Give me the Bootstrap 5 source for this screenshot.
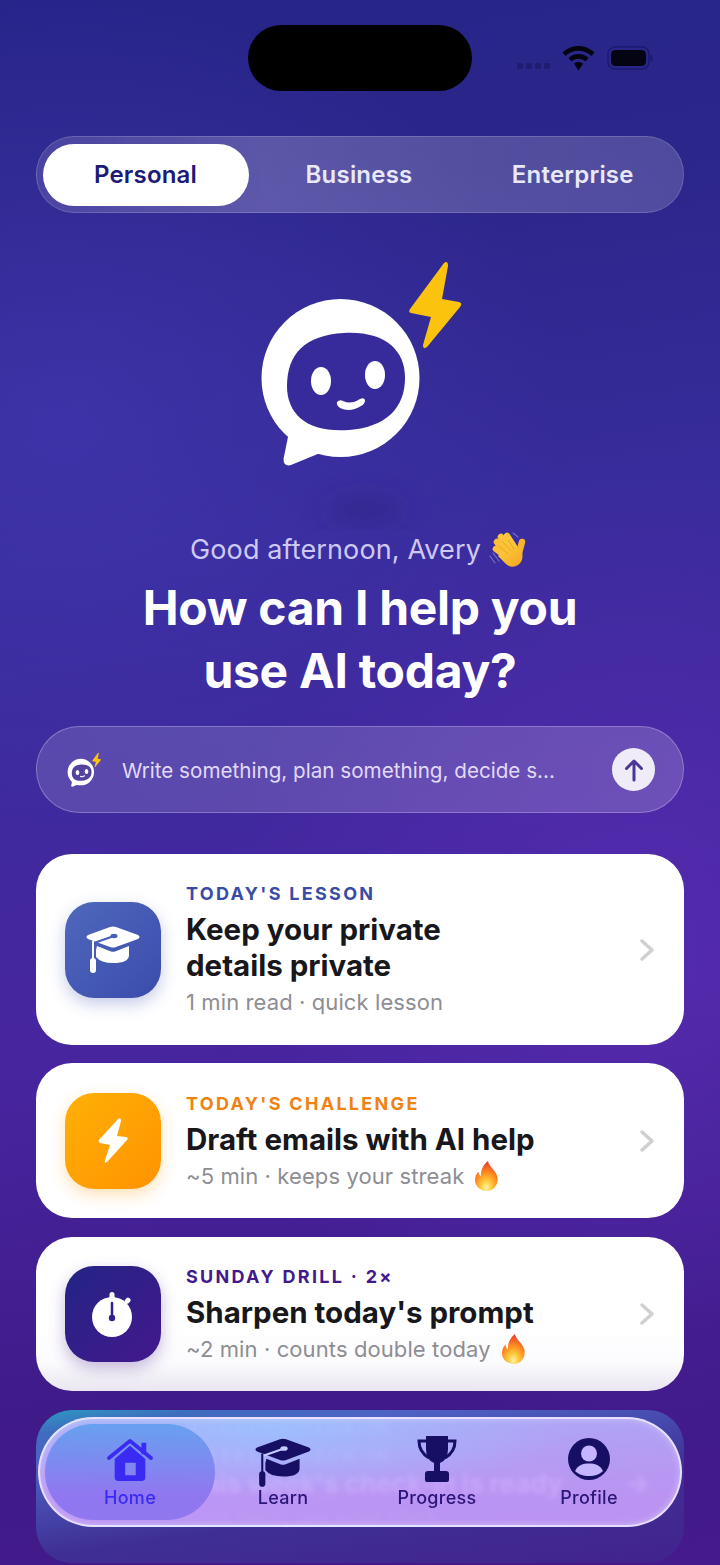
<!DOCTYPE html>
<html lang="en">
<head>
  <meta charset="UTF-8">
  <title>Home</title>
  <meta name="viewport" content="width=device-width, initial-scale=1">
  <link href="https://cdn.jsdelivr.net/npm/bootstrap@5.3.3/dist/css/bootstrap.min.css" rel="stylesheet">
  <style>
    body {
      margin: 0;
      font-family: "Inter", "Liberation Sans", sans-serif;
      background: #27288a;
    }

    .app-screen {
      width: 720px;
      height: 1565px;
      padding: 0 36px;
      background:
        radial-gradient(ellipse 420px 500px at 640px 950px, rgba(88, 44, 178, .75), transparent),
        radial-gradient(ellipse 500px 420px at 60px 420px, rgba(66, 54, 176, .7), transparent),
        linear-gradient(172deg, #27258a 0%, #2b2689 14%, #372c9b 34%, #41289f 52%, #47259f 64%, #3f1a88 86%, #451a8c 100%);
    }

    .status-row {
      display: grid;
      grid-template-columns: 1fr 224px 1fr;
      padding-top: 25px;
    }

    .island {
      height: 66px;
      background: #000;
      border-radius: 33px;
    }

    .status-icons {
      padding: 21px 0 0 45px;
      gap: 12px;
      margin-right: -36px;
    }

    .signal-dots {
      gap: 3px;
      margin-top: 17px;
    }

    .signal-dots i {
      width: 6px;
      height: 6px;
      border-radius: 1px;
      background: rgba(18, 16, 84, .42);
    }

    .plan-switch {
      display: grid;
      grid-template-columns: 206px 221px 1fr;
      height: 77px;
      margin-top: 45px;
      padding: 6.500px 7px 6.500px 5.500px;
      border: 1.500px solid rgba(255, 255, 255, .17);
      border-radius: 38px;
      background: linear-gradient(90deg, rgba(255, 255, 255, .12), rgba(255, 255, 255, .22) 35%, rgba(255, 255, 255, .17));
    }

    .plan-item {
      display: flex;
      align-items: center;
      justify-content: center;
      font-size: 24px;
      font-weight: 600;
      letter-spacing: .2px;
      color: #e9e7fa;
    }

    .plan-item.is-active {
      background: #fff;
      color: #1b1a78;
      border-radius: 31px;
    }

    .hero-mark {
      width: 210px;
      height: 272px;
      margin-top: 45px;
    }

    .greeting {
      height: 36px;
      margin-top: 2px;
      padding-right: 3px;
      font-size: 27px;
      line-height: 36px;
      letter-spacing: .12px;
      color: #cfc8f2;
      gap: 8px;
    }

    .hero-title {
      margin: 9px 0 0;
      font-size: 48px;
      line-height: 62.500px;
      font-weight: 700;
      letter-spacing: -.3px;
      color: #fff;
    }

    .ask-bar {
      height: 87px;
      margin-top: 24px;
      padding: 0 28px 0 29px;
      border: 1.500px solid rgba(255, 255, 255, .25);
      border-radius: 44px;
      background: linear-gradient(100deg, rgba(255, 255, 255, .14), rgba(255, 255, 255, .18));
    }

    .ask-text {
      margin-left: 20px;
      padding-top: 3px;
      font-size: 20.650px;
      color: #e0daf6;
      white-space: nowrap;
    }

    .ask-send {
      width: 43px;
      height: 43px;
      background: #efecf8;
    }

    .lesson-list {
      margin-top: 41px;
      gap: 18px;
    }

    .lesson-item {
      min-height: 155px;
      padding: 0 29px;
      gap: 25px;
      background: #fff;
      border-radius: 36px;
    }

    .lesson-item.is-tall {
      min-height: 191px;
    }

    .lesson-item.is-faded {
      min-height: 154px;
      margin-top: 1px;
      background: linear-gradient(180deg, #fff 60%, #fbfafd 82%, #e9e6f0 100%);
    }

    .lesson-copy {
      padding-top: 1px;
    }

    .tile {
      width: 96px;
      height: 96px;
      flex: none;
      border-radius: 29px;
    }

    .tile-blue {
      background: linear-gradient(135deg, #4f68bd, #3b4cab);
      box-shadow: 0 6px 16px rgba(64, 84, 180, .3);
    }

    .tile-orange {
      background: linear-gradient(135deg, #ffb006, #ff9300);
      box-shadow: 0 6px 16px rgba(255, 160, 20, .3);
    }

    .tile-indigo {
      background: linear-gradient(135deg, #232485, #44188c);
      box-shadow: 0 6px 16px rgba(68, 24, 140, .3);
    }

    .kicker {
      font-size: 18px;
      line-height: 24px;
      font-weight: 700;
      letter-spacing: 2.300px;
    }

    .kicker-blue { color: #3a4ba5; }
    .kicker-orange { color: #f08212; }
    .kicker-indigo { color: #421a8c; }

    .lesson-title {
      margin: 5px 0 0;
      font-size: 29.500px;
      line-height: 36px;
      font-weight: 700;
      color: #17171c;
    }

    .lesson-sub {
      margin-top: 4px;
      font-size: 22px;
      line-height: 30px;
      letter-spacing: .1px;
      color: #8d8d93;
      gap: 11px;
    }

    .lesson-arrow {
      margin-left: auto;
      flex: none;
    }

    .peek-card {
      height: 153px;
      margin-top: 19px;
      padding: 6px 34px 0 150px;
      border-radius: 36px;
      color: rgba(255, 255, 255, .6);
      background: linear-gradient(172deg, #2a9bc2 0%, #3f6cbe 10%, #4d62c4 22%, #3f2f94 60%, #42238e 100%);
    }

    .peek-label {
      font-size: 18px;
      font-weight: 700;
      letter-spacing: 2.400px;
      line-height: 24px;
      white-space: nowrap;
      opacity: .7;
    }

    .peek-echo {
      height: 28px;
    }

    .peek-title {
      font-size: 26px;
      font-weight: 700;
      line-height: 32px;
      white-space: nowrap;
    }

    .peek-sub {
      margin-top: 4px;
      font-size: 20px;
      line-height: 26px;
      white-space: nowrap;
      color: rgba(255, 255, 255, .2);
    }

    .tab-dock {
      position: absolute;
      left: 38px;
      top: 1417px;
      width: 644px;
      height: 110px;
      padding: 5px;
      border: 2px solid rgba(255, 255, 255, .68);
      border-radius: 55px;
      background:
        radial-gradient(ellipse 300px 70px at 230px 8px, rgba(150, 198, 255, .75), transparent),
        linear-gradient(180deg, rgba(190, 176, 255, .88), rgba(204, 163, 255, .88) 72%);
      box-shadow: inset 0 0 7px rgba(255, 255, 255, .35);
      backdrop-filter: blur(2px);
      display: grid;
      grid-template-columns: 170px 136px 172px 132px;
    }

    .tab-item {
      display: flex;
      flex-direction: column;
      align-items: center;
      justify-content: flex-end;
      height: 96px;
      padding-bottom: 11px;
      font-size: 18px;
      font-weight: 500;
      line-height: 22px;
      letter-spacing: .3px;
      color: #2b1578;
    }

    .tab-glyph-home { margin-bottom: 5px; }
    .tab-glyph-cap { margin-bottom: -1px; }
    .tab-glyph-cup { margin-bottom: 5px; }
    .tab-glyph-user { margin-bottom: 7px; }

    .tab-item.is-active {
      border-radius: 48px;
      color: #3a2af2;
      background: linear-gradient(180deg, rgba(100, 160, 238, .95), rgba(142, 118, 240, .95) 72%);
    }
  </style>
</head>
<body>

  <svg width="0" height="0" class="position-absolute">
    <defs>
      <radialGradient id="flame-fill" cx="50%" cy="88%" r="85%">
        <stop offset="0" stop-color="#fff3a6"/>
        <stop offset=".28" stop-color="#ffc93a"/>
        <stop offset=".6" stop-color="#ff8a1e"/>
        <stop offset="1" stop-color="#e8392c"/>
      </radialGradient>
      <linearGradient id="wave-fill" x1="0" y1="0" x2="1" y2="1">
        <stop offset="0" stop-color="#fdcf45"/>
        <stop offset="1" stop-color="#f6a71d"/>
      </linearGradient>
    </defs>
    <symbol id="cap-shape" viewBox="0 0 54 48">
      <path fill="currentColor" d="M24 1Q27 0 30 1L52 9Q55 11 52 13L30 21Q27 22 24 21L2 13Q-1 11 2 9Z"/>
      <path fill="currentColor" d="M11 20L25 25.500Q27 26 29 25.500L43 20V29Q43 37 27 37Q15 37 10 31V24Z"/>
      <path fill="none" stroke="var(--cut)" stroke-width="2.200" stroke-linecap="round" d="M28 10L8 17"/>
      <ellipse cx="28" cy="10" rx="3.500" ry="2.200" fill="var(--cut)"/>
      <path fill="none" stroke="currentColor" stroke-width="2" d="M7 15V33"/>
      <rect x="4" y="32" width="6" height="15" rx="3" fill="currentColor"/>
    </symbol>
    <symbol id="flame-shape" viewBox="0 0 24 30">
      <path fill="url(#flame-fill)" d="M13 0C13.500 5 20 9 22 14.500C24.500 22 19.500 30 12 30C5 30 0 25 0 19C0 15.500 1.500 12.500 3.500 10.500C3.500 13 4.500 14.500 6 15C5.500 9 8.500 3.500 13 0Z"/>
    </symbol>
  </svg>

  <div class="app-screen position-relative overflow-hidden">

    <div class="status-row">
      <div></div>
      <div class="island"></div>
      <div class="status-icons d-flex align-items-start">
        <div class="signal-dots d-flex">
          <i></i><i></i><i></i><i></i>
        </div>
        <svg width="33" height="25" viewBox="0 0 33 25">
          <path fill="#050510" d="M16.500 0C10 0 5 2.500 .5 6.500L3.500 10C7 6.800 11.500 4.800 16.500 4.800S26 6.800 29.500 10L32.500 6.500C28 2.500 23 0 16.500 0Z"/>
          <path fill="#050510" d="M16.500 8C12.500 8 9.200 9.500 6.500 12L9.600 15.400C11.500 13.700 13.800 12.700 16.500 12.700S21.500 13.700 23.400 15.400L26.500 12C23.800 9.500 20.500 8 16.500 8Z"/>
          <path fill="#050510" d="M16.500 16C14.700 16 13.200 16.600 12 17.800L16.500 24.500L21 17.800C19.800 16.600 18.300 16 16.500 16Z"/>
        </svg>
        <svg width="47" height="24" viewBox="0 0 47 24">
          <rect x="1" y="1" width="41" height="22" rx="7" fill="none" stroke="#1b1a70" stroke-width="1.500"/>
          <rect x="4" y="4" width="35" height="16" rx="4.500" fill="#040412"/>
          <rect x="43.500" y="9" width="2" height="6" rx="1" fill="#1b1a70"/>
        </svg>
      </div>
    </div>

    <div class="plan-switch">
      <div class="plan-item is-active">Personal</div>
      <div class="plan-item">Business</div>
      <div class="plan-item">Enterprise</div>
    </div>

    <div class="hero-mark mx-auto">
      <svg width="210" height="272" viewBox="255 258 210 272">
        <defs>
          <filter id="soft-shadow" x="-80%" y="-150%" width="260%" height="400%">
            <feGaussianBlur stdDeviation="12"/>
          </filter>
        </defs>
        <ellipse cx="364" cy="510" rx="40" ry="11" fill="#2a2278" opacity=".5" filter="url(#soft-shadow)"/>
        <circle cx="340.500" cy="378" r="79" fill="#fff"/>
        <path fill="#fff" d="M289 432L283.500 459Q283.500 467 291 465L325 451Z"/>
        <path fill="#372b9b" d="M344 333C385 331 405 350 405 378C405 408 386 427 349 430C308 433 287 415 287 386C287 354 305 335 344 333Z"/>
        <ellipse cx="321" cy="381" rx="10" ry="14" fill="#fff"/>
        <ellipse cx="375" cy="375" rx="10" ry="14" fill="#fff"/>
        <path fill="#fff" d="M337 402Q340 399 343 401Q351 405 360 399Q364 397 365 400Q365 404 361 406Q350 413 340 408Q336 405 337 402Z"/>
        <path fill="#fbc30e" d="M444 263Q448 260 448 266L442 299L459 302Q463 303 460 307L427 347Q423 350 423 345L431 317L411 313Q408 312 410 309Z"/>
      </svg>
    </div>

    <div class="greeting d-flex justify-content-center">
      <span>Good afternoon, Avery</span>
      <svg width="38" height="38" viewBox="0 0 38 38">
        <path d="M1 24L6 31M4 21L10 29M24 1L29 5" stroke="#7f8ac9" stroke-width="1.200" fill="none" stroke-linecap="round" opacity=".75"/>
        <g fill="none" stroke-width="6.500" stroke-linecap="round">
          <path stroke="#fac136" d="M7 17L19 26"/>
          <path stroke="#fac136" d="M8 10L21 22"/>
          <path stroke="#fbc63c" d="M12 5L24 19"/>
          <path stroke="#fbc63c" d="M18 4L27 18"/>
          <path stroke="#f8b42a" d="M33 10L29.500 23"/>
        </g>
        <path fill="url(#wave-fill)" d="M14 19L25 13L33 20Q35 29 29 33Q23 37 17 32L9 24Z"/>
        <path d="M10 14L19 22M13 9L22 19M19 8L25 17" stroke="#e09a1c" stroke-width=".8" fill="none"/>
      </svg>
    </div>

    <h1 class="hero-title text-center">How can I help you<br>use AI today?</h1>

    <div class="ask-bar d-flex align-items-center">
      <svg width="36" height="36" viewBox="255 258 210 215" class="flex-none">
        <circle cx="341" cy="378" r="79" fill="#fff"/>
        <path fill="#fff" d="M289 432L283.500 459Q283.500 467 291 465L325 451Z"/>
        <path fill="#54429f" d="M344 333C385 331 405 350 405 378C405 408 386 427 349 430C308 433 287 415 287 386C287 354 305 335 344 333Z"/>
        <ellipse cx="321" cy="381" rx="11" ry="15" fill="#fff"/>
        <ellipse cx="375" cy="375" rx="11" ry="15" fill="#fff"/>
        <path d="M339 403Q351 410 363 400" fill="none" stroke="#fff" stroke-width="7" stroke-linecap="round"/>
        <path fill="#fbc30e" d="M444 263Q448 260 448 266L442 299L459 302Q463 303 460 307L427 347Q423 350 423 345L431 317L411 313Q408 312 410 309Z"/>
      </svg>
      <span class="ask-text flex-grow-1">Write something, plan something, decide s...</span>
      <span class="ask-send rounded-circle d-flex align-items-center justify-content-center">
        <svg width="20" height="24" viewBox="0 0 20 24">
          <path d="M10 22V3M2.500 10.500L10 3L17.500 10.500" fill="none" stroke="#4b3596" stroke-width="3" stroke-linecap="round" stroke-linejoin="round"/>
        </svg>
      </span>
    </div>

    <div class="lesson-list d-flex flex-column">

      <div class="lesson-item is-tall d-flex align-items-center">
        <div class="tile tile-blue d-flex align-items-center justify-content-center">
          <svg width="54" height="48" style="--cut:#4a5fb7;color:#fff"><use href="#cap-shape"/></svg>
        </div>
        <div>
          <div class="kicker kicker-blue">TODAY'S LESSON</div>
          <h3 class="lesson-title">Keep your private<br>details private</h3>
          <div class="lesson-sub">1 min read · quick lesson</div>
        </div>
        <svg class="lesson-arrow" width="16" height="24" viewBox="0 0 16 24">
          <path d="M3 3L13 12L3 21" fill="none" stroke="#d0d0d3" stroke-width="3.500" stroke-linecap="round" stroke-linejoin="round"/>
        </svg>
      </div>

      <div class="lesson-item d-flex align-items-center">
        <div class="tile tile-orange d-flex align-items-center justify-content-center">
          <svg width="30" height="46" viewBox="0 0 30 46">
            <path fill="#fff" d="M20 1Q23 -1 23 3L19 18L28 19Q31 20 29 22L9 44Q6 46 7 42L12 27L2 25Q0 24 1 22Z"/>
          </svg>
        </div>
        <div class="lesson-copy">
          <div class="kicker kicker-orange">TODAY'S CHALLENGE</div>
          <h3 class="lesson-title">Draft emails with AI help</h3>
          <div class="lesson-sub d-flex align-items-center">
            <span>~5 min · keeps your streak</span>
            <svg width="24" height="30"><use href="#flame-shape"/></svg>
          </div>
        </div>
        <svg class="lesson-arrow" width="16" height="24" viewBox="0 0 16 24">
          <path d="M3 3L13 12L3 21" fill="none" stroke="#d0d0d3" stroke-width="3.500" stroke-linecap="round" stroke-linejoin="round"/>
        </svg>
      </div>

      <div class="lesson-item is-faded d-flex align-items-center">
        <div class="tile tile-indigo d-flex align-items-center justify-content-center">
          <svg width="42" height="46" viewBox="0 0 42 46">
            <circle cx="20" cy="26" r="20" fill="#fff"/>
            <rect x="17.500" y="1" width="5" height="8" rx="2.500" fill="#fff"/>
            <rect x="33" y="7" width="5" height="6" rx="2" transform="rotate(42 36 10)" fill="#fff"/>
            <path d="M20 12V26" stroke="#33208a" stroke-width="2.500" stroke-linecap="round"/>
            <circle cx="20" cy="27" r="3.200" fill="#33208a"/>
          </svg>
        </div>
        <div class="lesson-copy">
          <div class="kicker kicker-indigo">SUNDAY DRILL · 2×</div>
          <h3 class="lesson-title">Sharpen today's prompt</h3>
          <div class="lesson-sub d-flex align-items-center">
            <span>~2 min · counts double today</span>
            <svg width="24" height="30"><use href="#flame-shape"/></svg>
          </div>
        </div>
        <svg class="lesson-arrow" width="16" height="24" viewBox="0 0 16 24">
          <path d="M3 3L13 12L3 21" fill="none" stroke="#d0d0d3" stroke-width="3.500" stroke-linecap="round" stroke-linejoin="round"/>
        </svg>
      </div>
    </div>

    <div class="peek-card">
      <div class="peek-label peek-echo">WEEKLY CHECK-IN</div>
      <div class="peek-label">WEEKLY CHECK-IN</div>
      <div class="peek-title d-flex justify-content-between">
        <span>This week's check-in is ready</span>
        <span>→</span>
      </div>
      <div class="peek-sub">Look back, see what stuck</div>
    </div>

    <nav class="tab-dock">
      <div class="tab-item is-active">
        <svg class="tab-glyph-home" width="50" height="44" viewBox="0 0 50 46">
          <path fill="currentColor" fill-rule="evenodd" d="M9 22L25 8L41 22V41Q41 45 37 45H13Q9 45 9 41ZM20 26V39H31V26Z"/>
          <path fill="none" stroke="currentColor" stroke-width="4" stroke-linecap="round" stroke-linejoin="round" d="M3 21L25 3L47 21"/>
          <rect x="37" y="5" width="5" height="12" fill="currentColor"/>
        </svg>
        Home
      </div>
      <div class="tab-item">
        <svg class="tab-glyph-cap" width="56" height="50" style="--cut:#c6ccff;color:#160f63"><use href="#cap-shape"/></svg>
        Learn
      </div>
      <div class="tab-item">
        <svg class="tab-glyph-cup" width="40" height="46" viewBox="0 0 40 46">
          <path fill="#160f63" d="M9 0H31V13Q31 24 23 27V35H29Q32 35 32 38V44Q32 46 30 46H10Q8 46 8 44V38Q8 35 11 35H17V27Q9 24 9 13Z"/>
          <path fill="none" stroke="#160f63" stroke-width="3" d="M9 5H2Q2 16 12 22M31 5H38Q38 16 28 22"/>
        </svg>
        Progress
      </div>
      <div class="tab-item">
        <svg class="tab-glyph-user" width="42" height="42" viewBox="0 0 42 42">
          <circle cx="21" cy="21" r="21" fill="#160f63"/>
          <circle cx="21" cy="15.500" r="8" fill="#c5b4ff"/>
          <path fill="#c5b4ff" d="M7 33C10 27 15 25.500 21 25.500S32 27 35 33C32 36 27 38 21 38S10 36 7 33Z"/>
        </svg>
        Profile
      </div>
    </nav>
  </div>

  <script src="https://cdn.jsdelivr.net/npm/bootstrap@5.3.3/dist/js/bootstrap.bundle.min.js"></script>
</body>
</html>
